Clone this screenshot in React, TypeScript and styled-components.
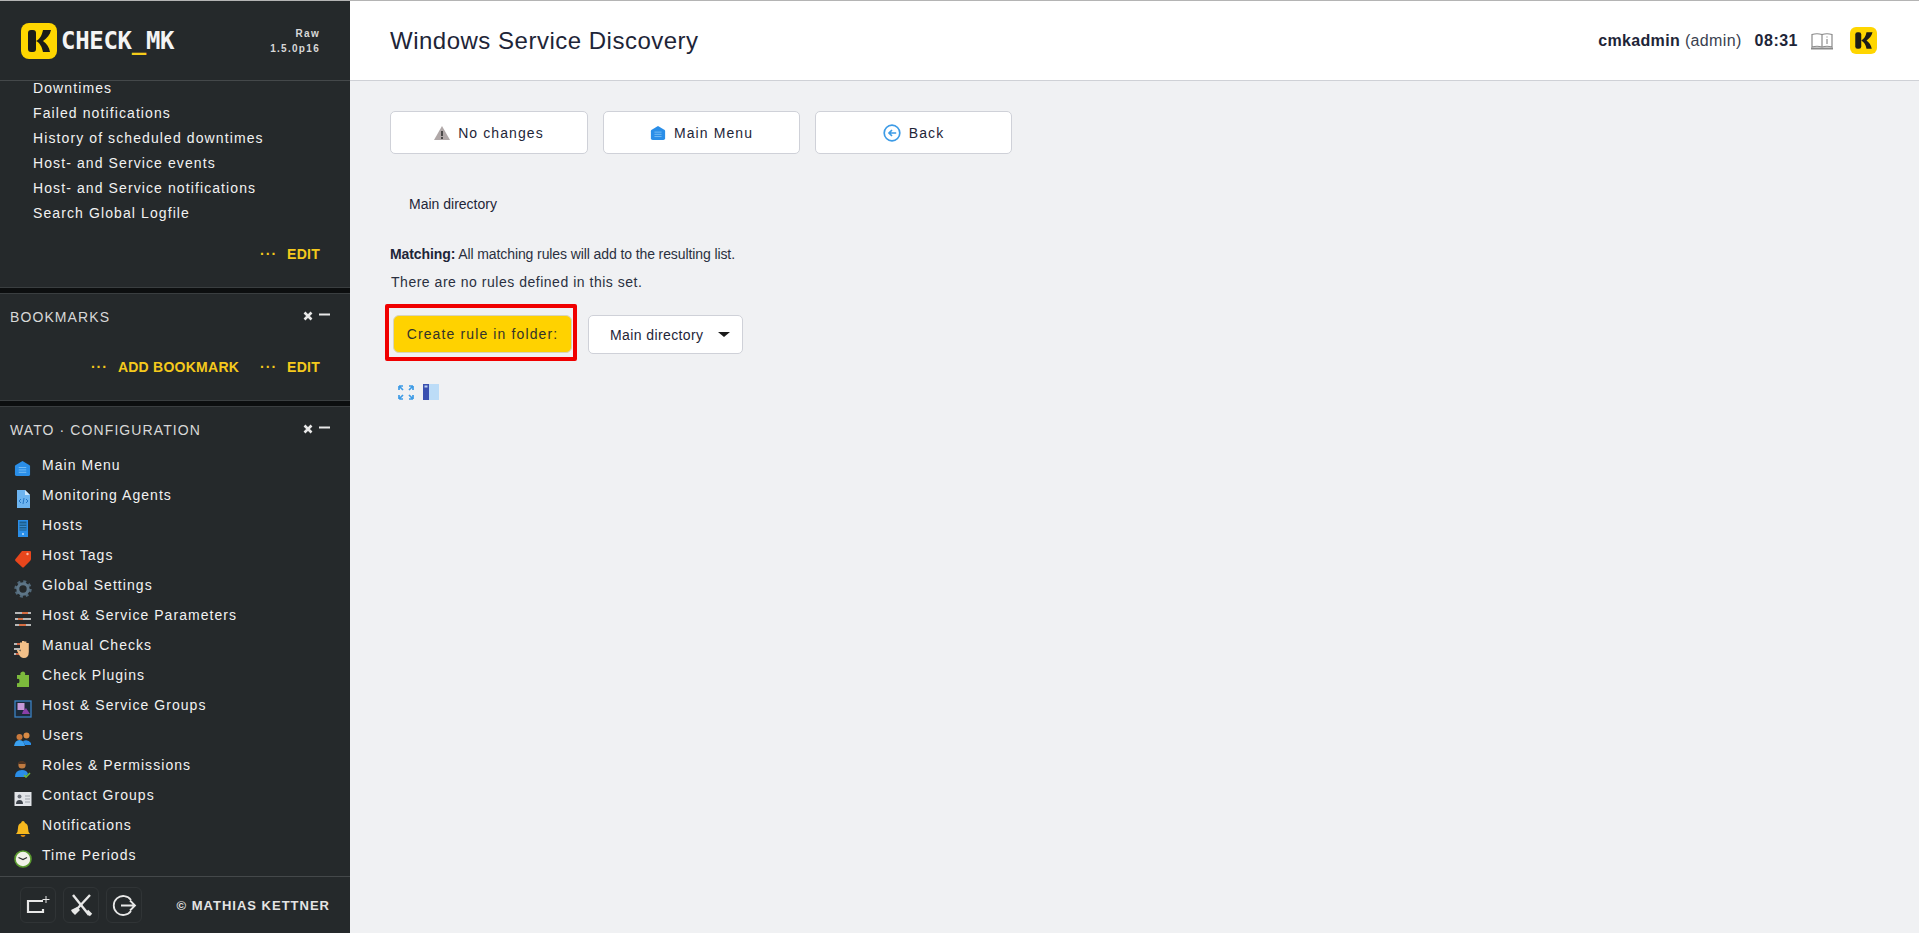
import React from "react";
import styled, { createGlobalStyle } from "styled-components";

const GlobalStyle = createGlobalStyle`
  html, body {
    margin: 0;
    padding: 0;
    height: 100%;
    overflow: hidden;
    font-family: "Liberation Sans", Arial, sans-serif;
  }
  #root { height: 100%; }
`;

const Page = styled.div`
  display: flex;
  height: 100vh;
  background: #f0f1f3;
`;

const Sidebar = styled.aside`
  width: 350px;
  flex-shrink: 0;
  display: flex;
  flex-direction: column;
  background: #0c0e0f;
  color: #f2f2f2;
`;

const SideHeader = styled.div`
  height: 81px;
  box-sizing: border-box;
  border-top: 1px solid #b4b4b4;
  border-bottom: 1px solid #44484a;
  background: #25292b;
  display: flex;
  align-items: center;
  justify-content: space-between;
  padding: 0 30px 0 21px;
`;

const LogoWrap = styled.div`
  display: flex;
  align-items: center;
  gap: 4px;
`;

const LogoText = styled.span`
  font-family: "DejaVu Sans Mono", monospace;
  font-weight: 700;
  font-size: 24px;
  letter-spacing: -0.3px;
  color: #f4f4f4;
  em {
    font-style: normal;
    color: #f5cc1a;
  }
`;

const Version = styled.div`
  text-align: right;
  font-size: 10px;
  font-weight: 700;
  letter-spacing: 1.3px;
  line-height: 15px;
  color: #d8d8d8;
`;

const SideBody = styled.div`
  flex: 1;
  min-height: 0;
  overflow: hidden;
  display: flex;
  flex-direction: column;
`;

const Panel = styled.section<{ $pb: number }>`
  background: #25292b;
  padding-bottom: ${({ $pb }) => $pb}px;
  border-bottom: 1px solid #3a3e40;
  & + & {
    margin-top: 5px;
    border-top: 1px solid #3a3e40;
  }
  &:last-child {
    flex: 1;
    border-bottom: 0;
  }
`;

const PlainList = styled.div`
  padding: 0 0 0 33px;
`;

const PlainLink = styled.div`
  height: 25px;
  line-height: 25px;
  font-size: 14px;
  letter-spacing: 1.1px;
  white-space: nowrap;
`;

const PlainTop = styled(PlainLink)`
  height: 20px;
  line-height: 15px;
`;

const Footlinks = styled.div<{ $mt: number }>`
  display: flex;
  justify-content: flex-end;
  gap: 21px;
  padding-right: 30px;
  margin-top: ${({ $mt }) => $mt}px;
`;

const Footlink = styled.span`
  font-size: 14px;
  font-weight: 700;
  letter-spacing: 0.25px;
  color: #f5c91c;
  line-height: 16px;
  white-space: nowrap;
  &::before {
    content: "···";
    font-weight: 700;
    letter-spacing: 1px;
    margin-right: 10px;
  }
`;

const PanelHead = styled.div<{ $mt: number }>`
  display: flex;
  justify-content: space-between;
  align-items: center;
  height: 20px;
  margin-top: ${({ $mt }) => $mt}px;
  padding: 0 20px 0 10px;
`;

const PanelTitle = styled.span`
  font-size: 14px;
  letter-spacing: 1.1px;
  color: #d8d8d8;
  white-space: nowrap;
`;

const PanelControls = styled.span`
  display: flex;
  gap: 6px;
  align-items: center;
  margin-bottom: 2px;
`;

const NavList = styled.div`
  margin-top: 12px;
`;

const NavRow = styled.div`
  display: flex;
  align-items: center;
  height: 30px;
  padding-left: 14px;
`;

const NavIconBox = styled.span`
  width: 18px;
  height: 18px;
  margin: 4px 10px 0 0;
  svg {
    display: block;
  }
`;

const NavLabel = styled.span`
  font-size: 14px;
  letter-spacing: 1.05px;
  margin-bottom: 4px;
  white-space: nowrap;
`;

const SideFooter = styled.div`
  height: 57px;
  box-sizing: border-box;
  background: #25292b;
  border-top: 1px solid #44484a;
  display: flex;
  align-items: center;
  padding: 0 20px;
`;

const FootButton = styled.span`
  width: 36px;
  height: 36px;
  box-sizing: border-box;
  border: 1px solid #303436;
  border-radius: 6px;
  margin-right: 7px;
  display: flex;
  align-items: center;
  justify-content: center;
`;

const Copyright = styled.span`
  margin-left: auto;
  font-size: 13px;
  font-weight: 700;
  letter-spacing: 1px;
  color: #e4e4e4;
  white-space: nowrap;
`;

const Main = styled.main`
  flex: 1;
  min-width: 0;
  display: flex;
  flex-direction: column;
`;

const TopBar = styled.header`
  height: 81px;
  box-sizing: border-box;
  background: #fff;
  border-top: 1px solid #b4b4b4;
  border-bottom: 1px solid #cfd1d6;
  display: flex;
  align-items: center;
  padding: 0 42px 0 40px;
`;

const Title = styled.h1`
  margin: 0;
  font-size: 24px;
  font-weight: 400;
  letter-spacing: 0.5px;
  color: #1e2538;
`;

const UserArea = styled.div`
  margin-left: auto;
  display: flex;
  align-items: center;
  color: #1e2538;
`;

const UserName = styled.span`
  font-size: 16px;
  letter-spacing: 0.35px;
  color: #3a3f50;
  margin-right: 13px;
  b {
    color: #1e2538;
  }
`;

const Clock = styled.b`
  font-size: 16px;
  margin-right: 13px;
  letter-spacing: 0.5px;
`;

const BookSlot = styled.span`
  display: flex;
  margin-right: 17px;
`;

const Content = styled.div`
  padding: 30px 0 0 36px;
  color: #1e2538;
`;

const ButtonRow = styled.div`
  display: flex;
  gap: 15px;
  margin-left: 4px;
`;

const ActionButton = styled.div<{ $w: number }>`
  width: ${({ $w }) => $w}px;
  height: 43px;
  box-sizing: border-box;
  background: #fff;
  border: 1px solid #cfd1d8;
  border-radius: 5px;
  display: flex;
  align-items: center;
  justify-content: center;
  gap: 8px;
  font-size: 14px;
  letter-spacing: 1.1px;
`;

const FolderTitle = styled.div`
  margin: 42px 0 0 23px;
  font-size: 14px;
  line-height: 16px;
`;

const MatchLine = styled.div`
  margin: 34px 0 0 4px;
  font-size: 14px;
  line-height: 16px;
  letter-spacing: -0.1px;
  color: #2a3040;
  b {
    color: #1e2538;
  }
`;

const EmptyLine = styled.div`
  margin: 12px 0 0 5px;
  font-size: 14px;
  line-height: 16px;
  letter-spacing: 0.52px;
  color: #2a3040;
`;

const CreateRow = styled.div`
  display: flex;
  align-items: flex-start;
  margin-top: 14px;
  margin-left: -1px;
`;

const Highlight = styled.div`
  box-sizing: border-box;
  border: 4px solid #f00000;
  border-radius: 2px;
  padding: 7px 1px 4px 4px;
  width: 192px;
  height: 57px;
`;

const CreateButton = styled.div`
  height: 38px;
  box-sizing: border-box;
  background: #ffd200;
  border: 1px solid #d8d4bc;
  border-radius: 6px;
  display: flex;
  align-items: center;
  justify-content: center;
  font-size: 14px;
  letter-spacing: 1.13px;
  color: #33322a;
  white-space: nowrap;
`;

const FolderSelect = styled.div`
  width: 155px;
  height: 39px;
  box-sizing: border-box;
  margin: 11px 0 0 11px;
  background: #fff;
  border: 1px solid #cfd1d8;
  border-radius: 5px;
  display: flex;
  align-items: center;
  justify-content: space-between;
  padding: 0 12px 0 21px;
  font-size: 14px;
  letter-spacing: 0.4px;
  white-space: nowrap;
`;

const Caret = styled.span`
  width: 0;
  height: 0;
  border-left: 6px solid transparent;
  border-right: 6px solid transparent;
  border-top: 5px solid #1a1a1a;
`;

const ToolIcons = styled.div`
  display: flex;
  gap: 8px;
  margin: 23px 0 0 11px;
`;

const BrandMark = ({ size }: { size: number }) => (
  <svg width={size} height={size} viewBox="0 0 36 36">
    <rect x="0" y="0" width="36" height="36" rx="8" fill="#ffd600" />
    <path
      d="M7 10q0-3 3-3h2q3 0 3 3v16q0 3-3 3h-2q-3 0-3-3z"
      fill="#1c1c18"
    />
    <path
      d="M30 7h-8c-1 5-3 9-7 11 4 2 6 6 7 11h7c-1-5-3-8-7-11 4-3 7-6 8-11z"
      fill="#1c1c18"
    />
  </svg>
);

const MainMenuIcon = ({ size = 17 }: { size?: number }) => (
  <svg width={size} height={size} viewBox="0 0 18 18">
    <path
      d="M9 1 L16.5 5.5 Q17 6 17 7 V15 Q17 17 15 17 H3 Q1 17 1 15 V7 Q1 6 1.5 5.5 Z"
      fill="#2a8ee8"
    />
    <path d="M5 8h8M5 10.5h8M5 13h8" stroke="#7cc0f5" strokeWidth="1" />
  </svg>
);

const AgentIcon = () => (
  <svg width="18" height="18" viewBox="0 0 18 18">
    <path d="M3 0h8l5 5v13H3z" fill="#6db4f0" />
    <path d="M11 0l5 5h-5z" fill="#cfe6fa" />
    <path
      d="M7 9l-2 2 2 2M12 9l2 2-2 2M10 8l-1 6"
      stroke="#1d6fc0"
      strokeWidth="0.9"
      fill="none"
    />
  </svg>
);

const HostIcon = () => (
  <svg width="18" height="18" viewBox="0 0 18 18">
    <rect x="4" y="0" width="10" height="17" fill="#2a8ee8" />
    <rect x="5.5" y="1.5" width="7" height="9" fill="#1d5f8e" />
    <path d="M5.5 4h7M5.5 6.5h7M5.5 9h7" stroke="#3c9ae6" strokeWidth="0.8" />
    <circle cx="9" cy="14" r="0.9" fill="#cfe6fa" />
  </svg>
);

const TagIcon = () => (
  <svg width="18" height="18" viewBox="0 0 18 18">
    <path
      d="M8 1h8q1 0 1 1v7q0 1-1 2l-6 6q-1 1-2 0L1.500 11q-1-1 0-2z"
      fill="#e8461c"
    />
    <circle cx="13.500" cy="4" r="1.200" fill="#f7b9a3" />
  </svg>
);

const GearIcon = () => (
  <svg width="18" height="18" viewBox="0 0 18 18">
    <circle
      cx="9"
      cy="9"
      r="7"
      fill="none"
      stroke="#52697a"
      strokeWidth="3.400"
      strokeDasharray="2.800 2.700"
    />
    <circle cx="9" cy="9" r="5.200" fill="none" stroke="#5d7587" strokeWidth="3" />
  </svg>
);

const ParametersIcon = () => (
  <svg width="18" height="18" viewBox="0 0 18 18">
    <path d="M1 3h16M1 9h16M1 15h16" stroke="#e6e6e6" strokeWidth="1.600" />
    <path d="M8 3h6M4 9h5M5 15h7" stroke="#e0561c" strokeWidth="1.600" />
  </svg>
);

const HandIcon = () => (
  <svg width="18" height="18" viewBox="0 0 18 18">
    <path d="M0 4h8M0 9h6M0 14h7" stroke="#e6e6e6" strokeWidth="1.400" />
    <path d="M3 4h4M2 14h3" stroke="#d0481c" strokeWidth="1.400" />
    <path
      d="M6 9V2.500h2V7V1h2.200V7V1.500h2.200V7V3h2.400v9q0 6-5 6-3.500 0-5-4l-2-3.500 1.200-1 3 2z"
      fill="#f2c089"
    />
  </svg>
);

const PluginIcon = () => (
  <svg width="18" height="18" viewBox="0 0 18 18">
    <path
      d="M3 5h3.500q-1-3 2.500-3.500Q12 2 11 5h4v12H3v-4q2.500 1 2.500-2T3 9z"
      fill="#7cba3c"
    />
  </svg>
);

const GroupsIcon = () => (
  <svg width="18" height="18" viewBox="0 0 18 18">
    <rect x="1" y="1" width="16" height="16" fill="#1d2b3a" stroke="#3b82c4" strokeWidth="1.300" />
    <rect x="3.500" y="3" width="7" height="7" fill="#c79ad9" />
    <path d="M9 11l3-3 4 6H8z" fill="#8a3fa8" />
  </svg>
);

const UsersIcon = () => (
  <svg width="18" height="18" viewBox="0 0 18 18">
    <circle cx="5.500" cy="7" r="3" fill="#c9793c" />
    <circle cx="12.500" cy="5.500" r="3" fill="#d98a44" />
    <path d="M9 11q5-2 8 2v2h-6z" fill="#2a8ee8" />
    <path d="M0 16q1-6 5.500-6T11 16z" fill="#3aa0f0" />
  </svg>
);

const RoleIcon = () => (
  <svg width="18" height="18" viewBox="0 0 18 18">
    <circle cx="8" cy="5" r="3.600" fill="#c07a40" />
    <path d="M4 2.500q4-3 8 .5l-1 1H5z" fill="#4d3322" />
    <path d="M1 17q0-7 7-7 5 0 6 4l-3 3z" fill="#2a8ee8" />
    <path d="M10 15l2 2 4-4" stroke="#6fb83a" strokeWidth="1.600" fill="none" />
  </svg>
);

const ContactIcon = () => (
  <svg width="18" height="18" viewBox="0 0 18 18">
    <rect x="0.500" y="2" width="17" height="14" fill="#e2e4e8" />
    <circle cx="5.500" cy="6.500" r="2" fill="#6a6f78" />
    <path d="M2 14q0-4 3.500-4T9 14z" fill="#3b4048" />
    <path d="M11 6h5M11 9h5M11 12h5" stroke="#9aa0a8" strokeWidth="1" />
  </svg>
);

const BellIcon = () => (
  <svg width="18" height="18" viewBox="0 0 18 18">
    <path
      d="M9 1q1.500 0 2 2 3 1 3 5 0 4 2 6H2q2-2 2-6 0-4 3-5 .5-2 2-2z"
      fill="#f7b81e"
    />
    <path d="M6.500 15h5q-.5 2-2.500 2t-2.500-2z" fill="#e08a10" />
  </svg>
);

const ClockIcon = () => (
  <svg width="18" height="18" viewBox="0 0 18 18">
    <circle cx="9" cy="9" r="8" fill="#f2f2e8" stroke="#5a9a2e" strokeWidth="1.600" />
    <path d="M4.500 7.500L9 9.500l4-2" stroke="#2a2a2a" strokeWidth="1.200" fill="none" />
  </svg>
);

const navItems: { label: string; icon: React.ReactNode }[] = [
  { label: "Main Menu", icon: <MainMenuIcon /> },
  { label: "Monitoring Agents", icon: <AgentIcon /> },
  { label: "Hosts", icon: <HostIcon /> },
  { label: "Host Tags", icon: <TagIcon /> },
  { label: "Global Settings", icon: <GearIcon /> },
  { label: "Host & Service Parameters", icon: <ParametersIcon /> },
  { label: "Manual Checks", icon: <HandIcon /> },
  { label: "Check Plugins", icon: <PluginIcon /> },
  { label: "Host & Service Groups", icon: <GroupsIcon /> },
  { label: "Users", icon: <UsersIcon /> },
  { label: "Roles & Permissions", icon: <RoleIcon /> },
  { label: "Contact Groups", icon: <ContactIcon /> },
  { label: "Notifications", icon: <BellIcon /> },
  { label: "Time Periods", icon: <ClockIcon /> },
];

const PanelButtons = () => (
  <PanelControls>
    <svg width="10" height="10" viewBox="0 0 10 10">
      <path d="M1.500 1.500l7 7M8.500 1.500l-7 7" stroke="#e8e8e8" strokeWidth="2.600" />
    </svg>
    <svg width="11" height="10" viewBox="0 0 11 10">
      <path d="M0 3.500h11" stroke="#e8e8e8" strokeWidth="2" />
    </svg>
  </PanelControls>
);

const App = () => (
  <>
    <GlobalStyle />
    <Page>
      <Sidebar>
        <SideHeader>
          <LogoWrap>
            <BrandMark size={36} />
            <LogoText>
              CHECK<em>_</em>MK
            </LogoText>
          </LogoWrap>
          <Version>
            Raw
            <br />
            1.5.0p16
          </Version>
        </SideHeader>
        <SideBody>
          <Panel $pb={25}>
            <PlainList>
              <PlainTop>Downtimes</PlainTop>
              <PlainLink>Failed notifications</PlainLink>
              <PlainLink>History of scheduled downtimes</PlainLink>
              <PlainLink>Host- and Service events</PlainLink>
              <PlainLink>Host- and Service notifications</PlainLink>
              <PlainLink>Search Global Logfile</PlainLink>
            </PlainList>
            <Footlinks $mt={20}>
              <Footlink>EDIT</Footlink>
            </Footlinks>
          </Panel>
          <Panel $pb={25}>
            <PanelHead $mt={13}>
              <PanelTitle>BOOKMARKS</PanelTitle>
              <PanelButtons />
            </PanelHead>
            <Footlinks $mt={32}>
              <Footlink>ADD BOOKMARK</Footlink>
              <Footlink>EDIT</Footlink>
            </Footlinks>
          </Panel>
          <Panel $pb={0}>
            <PanelHead $mt={13}>
              <PanelTitle>WATO · CONFIGURATION</PanelTitle>
              <PanelButtons />
            </PanelHead>
            <NavList>
              {navItems.map((item) => (
                <NavRow key={item.label}>
                  <NavIconBox>{item.icon}</NavIconBox>
                  <NavLabel>{item.label}</NavLabel>
                </NavRow>
              ))}
            </NavList>
          </Panel>
        </SideBody>
        <SideFooter>
          <FootButton>
            <svg width="26" height="26" viewBox="0 0 26 26">
              <path d="M18 9H3v11h15v-3" stroke="#e8e8e8" strokeWidth="2.200" fill="none" />
              <path d="M21 4v7M17.500 7.500h7" stroke="#e8e8e8" strokeWidth="1" />
            </svg>
          </FootButton>
          <FootButton>
            <svg width="26" height="26" viewBox="0 0 26 26">
              <path d="M5 3l16 20" stroke="#e8e8e8" strokeWidth="2.400" />
              <path d="M22 3L9 17" stroke="#e8e8e8" strokeWidth="2.400" />
              <path d="M9 15l3 3-5 5-3-3-1-2z" fill="#e8e8e8" />
              <path d="M19 19l4 4" stroke="#e8e8e8" strokeWidth="3.400" />
            </svg>
          </FootButton>
          <FootButton>
            <svg width="26" height="26" viewBox="0 0 26 26">
              <path d="M20 8A9.500 9.500 0 1 0 20 19" stroke="#e8e8e8" strokeWidth="1.800" fill="none" />
              <path d="M10 13.500h14M19 8.500l5 5-5 5" stroke="#e8e8e8" strokeWidth="1.800" fill="none" />
            </svg>
          </FootButton>
          <Copyright>© MATHIAS KETTNER</Copyright>
        </SideFooter>
      </Sidebar>
      <Main>
        <TopBar>
          <Title>Windows Service Discovery</Title>
          <UserArea>
            <UserName>
              <b>cmkadmin</b> (admin)
            </UserName>
            <Clock>08:31</Clock>
            <BookSlot>
              <svg width="22" height="18" viewBox="0 0 22 18">
                <path d="M11 2.500Q6 1 1 2.500V15q5-1.500 10 0 5-1.500 10 0V2.500Q16 1 11 2.500z" fill="#fff" stroke="#8a8a8a" strokeWidth="1.200" />
                <path d="M11 2.500V15" stroke="#8a8a8a" strokeWidth="1.200" />
                <path d="M0 16.500h22" stroke="#8a8a8a" strokeWidth="2" />
                <path d="M16 7v5M16 4.500v1" stroke="#777" strokeWidth="1" />
              </svg>
            </BookSlot>
            <BrandMark size={27} />
          </UserArea>
        </TopBar>
        <Content>
          <ButtonRow>
            <ActionButton $w={198}>
              <svg width="16" height="14" viewBox="0 0 16 14">
                <path d="M8 0l8 14H0z" fill="#b0a8a8" />
                <path d="M8 5v5M8 11v2" stroke="#2a2a2a" strokeWidth="1.500" />
              </svg>
              No changes
            </ActionButton>
            <ActionButton $w={197}>
              <MainMenuIcon size={16} />
              Main Menu
            </ActionButton>
            <ActionButton $w={197}>
              <svg width="18" height="18" viewBox="0 0 15 15">
                <circle cx="7.500" cy="7.500" r="6.500" fill="none" stroke="#3d9be6" strokeWidth="1.400" />
                <path d="M11 7.500H5M7.500 5l-2.500 2.500 2.500 2.500" stroke="#3d9be6" strokeWidth="1.400" fill="none" />
              </svg>
              Back
            </ActionButton>
          </ButtonRow>
          <FolderTitle>Main directory</FolderTitle>
          <MatchLine>
            <b>Matching:</b> All matching rules will add to the resulting list.
          </MatchLine>
          <EmptyLine>There are no rules defined in this set.</EmptyLine>
          <CreateRow>
            <Highlight>
              <CreateButton>Create rule in folder:</CreateButton>
            </Highlight>
            <FolderSelect>
              Main directory
              <Caret />
            </FolderSelect>
          </CreateRow>
          <ToolIcons>
            <svg width="18" height="17" viewBox="0 0 18 17">
              <path d="M2 2l4 4M2 2h4M2 2v4M16 2l-4 4M16 2h-4M16 2v4M2 15l4-4M2 15h4M2 15v-4M16 15l-4-4M16 15h-4M16 15v-4" stroke="#3d9be6" strokeWidth="1.700" fill="none" />
            </svg>
            <svg width="16" height="16" viewBox="0 0 16 16">
              <rect width="16" height="16" fill="#bcdcf7" />
              <rect width="6" height="16" fill="#3a50b0" />
              <rect x="1.500" y="1.500" width="3" height="2" fill="#bcd0f0" />
            </svg>
          </ToolIcons>
        </Content>
      </Main>
    </Page>
  </>
);

export default App;
